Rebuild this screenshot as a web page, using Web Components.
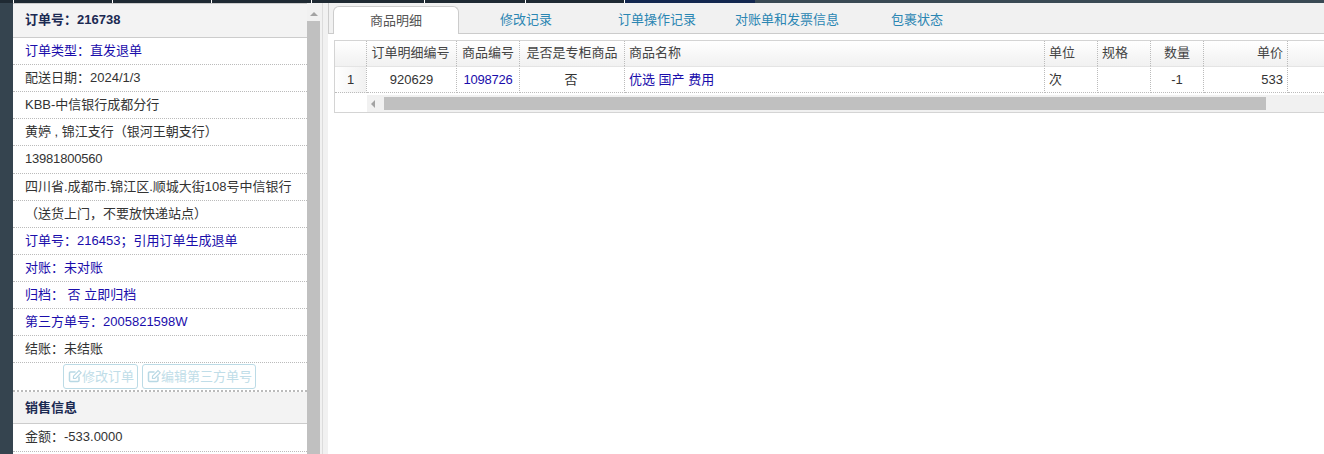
<!DOCTYPE html>
<html lang="zh">
<head>
<meta charset="utf-8">
<style>
  html, body { margin: 0; height: 100%; overflow: hidden; background: #fff; }
  body { font: 12px "Liberation Sans", "Noto Sans CJK SC", sans-serif; color: #333; }
</style>
</head>
<body>
<order-page>
  <order-sidebar slot="side">
    <side-head style="height:33.8px">订单号：216738</side-head>
    <side-row blue>订单类型：直发退单</side-row>
    <side-row>配送日期：2024/1/3</side-row>
    <side-row>KBB-中信银行成都分行</side-row>
    <side-row>黄婷 , 锦江支行（银河王朝支行）</side-row>
    <side-row style="letter-spacing:-.2px">13981800560</side-row>
    <side-row>四川省.成都市.锦江区.顺城大街108号中信银行</side-row>
    <side-row>（送货上门，不要放快递站点）</side-row>
    <side-row blue>订单号：216453；引用订单生成退单</side-row>
    <side-row blue>对账：未对账</side-row>
    <side-row blue>归档： 否 立即归档</side-row>
    <side-row blue>第三方单号：2005821598W</side-row>
    <side-row>结账：未结账</side-row>
    <side-actions>
      <edit-button>修改订单</edit-button>
      <edit-button>编辑第三方单号</edit-button>
    </side-actions>
    <side-head>销售信息</side-head>
    <side-row>金额：-533.0000</side-row>
  </order-sidebar>
  <order-main slot="main"></order-main>
</order-page>
<script>
class OrderPage extends HTMLElement {
  constructor() {
    super();
    this.attachShadow({ mode: "open" });
    this.shadowRoot.innerHTML = `
    <style>
      :host { display: block; height: 454px; overflow: hidden; }
      .top { display: flex; height: 3px; background: #3a4a54; }
      .top i { flex: none; box-sizing: border-box; background: #1f2a33; border-left: 1px solid #fff; }
      .top i:first-child { border: 0; }
      .top b { flex: none; width: 131px; box-sizing: border-box; background: #13274f; border-left: 1px solid #fff; }
      .wrap { display: flex; height: 451px; }
      .rail { width: 13px; flex: none; background: #35444f; }
      .side { width: 294px; flex: none; overflow: hidden; background: #fff; border-top: 1px solid #ccc; }
      .bar { width: 13px; flex: none; display: flex; flex-direction: column; align-items: center; background: #f1f1f1; }
      .bar .up { width: 0; height: 0; margin: 9px 0 5px; border: 4px solid transparent; border-top: 0; border-bottom: 4px solid #a3a3a3; }
      .bar .th { width: 13px; flex: 1; background: #c0c0c0; }
      .gut { width: 8px; flex: none; padding-left: 2px; box-sizing: border-box; background: #f1f1f1; }
      .gut div { height: 100%; border-left: 1px solid #dcdcdc; }
      .main { flex: 1; min-width: 0; }
    </style>
    <div class="top">
      <i style="width:13px"></i><i style="width:99px"></i><i style="width:99px"></i><i style="width:100px"></i>
      <i style="width:113px"></i><i style="width:101px"></i><i style="width:99px"></i><b></b>
    </div>
    <div class="wrap">
      <div class="rail"></div>
      <div class="side"><slot name="side"></slot></div>
      <div class="bar"><div class="up"></div><div class="th"></div></div>
      <div class="gut"><div></div></div>
      <div class="main"><slot name="main"></slot></div>
    </div>`;
  }
}

class OrderSidebar extends HTMLElement {
  constructor() {
    super();
    this.attachShadow({ mode: "open" }).innerHTML = `
    <style>:host { display: block; }</style><slot></slot>`;
  }
}

class SideHead extends HTMLElement {
  constructor() {
    super();
    this.attachShadow({ mode: "open" }).innerHTML = `
    <style>
      :host { display: block; height: 32.5px; line-height: 31px; padding-left: 12px; box-sizing: border-box;
        background: #f3f3f3; border-bottom: 1px solid #ccc; font-weight: bold; font-size: 13px; color: #1b2a52; }
    </style><slot></slot>`;
  }
}

class SideRow extends HTMLElement {
  constructor() {
    super();
    this.attachShadow({ mode: "open" }).innerHTML = `
    <style>
      :host { display: block; height: 27.15px; line-height: 26px; padding-left: 12px; box-sizing: border-box;
        border-bottom: 1px dotted #bbb; font-size: 13px; color: #333; white-space: nowrap; }
      :host([blue]) { color: #1a0dab; }
    </style><slot></slot>`;
  }
}

class SideActions extends HTMLElement {
  constructor() {
    super();
    this.attachShadow({ mode: "open" }).innerHTML = `
    <style>
      :host { display: flex; gap: 4px; height: 28.4px; padding: 1px 0 0 50px; box-sizing: border-box;
        border-bottom: 2px dotted #bbb; }
    </style><slot></slot>`;
  }
}

class EditButton extends HTMLElement {
  constructor() {
    super();
    this.attachShadow({ mode: "open" }).innerHTML = `
    <style>
      :host { display: flex; align-items: center; height: 25px; padding: 0 3px 2px 4px; box-sizing: border-box;
        border: 1px solid #bcdbe6; border-radius: 3px; font-size: 13px; color: #c0dde8; }
      svg { width: 14px; height: 14px; flex: none; }
    </style>
    <svg viewBox="0 0 14 14" fill="none" stroke="#b8d8e4" stroke-width="1.5">
      <path d="M11 7.5V11.5a1 1 0 0 1-1 1H2.5a1 1 0 0 1-1-1V4a1 1 0 0 1 1-1H7.5"/>
      <path d="M5.5 9.5V7.2L11 1.5 13.2 3.7 7.7 9.5z" stroke-width="1.2"/>
    </svg><slot></slot>`;
  }
}

class OrderMain extends HTMLElement {
  constructor() {
    super();
    this.attachShadow({ mode: "open" }).innerHTML = `
    <style>
      :host { display: block; font-size: 13px; }
      .tabs { display: flex; height: 27px; padding: 3px 0 0 2px; background: #f1f1f1;
        border-bottom: 1px solid #ccc; border-left: 1px solid #ccc; }
      .tab { width: 130px; flex: none; box-sizing: border-box; text-align: center; line-height: 28px; color: #2b86b3; }
      .tab.on { height: 28px; margin: 0 2px 0 2px; width: 126px; background: #fff; color: #555;
        border: 1px solid #ccc; border-bottom: 0; border-radius: 6px 6px 0 0; line-height: 27px; }
      .grid { margin: 6px 0 0 6px; border: 1px solid #d4d4d4; border-right: 0; }
      .row { display: grid; grid-template-columns: 32px 90px 63px 105px 420px 53px 53px 53px 84px 1fr; }
      .row > div { padding: 0 4px; box-sizing: border-box; white-space: nowrap; border-right: 1px dotted #bbb; }
      .row > div:last-child { border-right: 0; }
      .hd > div { height: 25px; line-height: 24px; background: linear-gradient(#fff, #f1f1f1); color: #444; }
      .bd > div { height: 27px; line-height: 26px; border-top: 1px solid #e4e4e4; border-bottom: 1px dotted #bbb; }
      .bd > div:first-child { background: linear-gradient(90deg, #fff, #f1f1f1); }
      .c { text-align: center; } .r { text-align: right; }
      .bl { color: #1a0dab; }
      .sb { display: flex; height: 19px; padding: 2px 0 0 32px; box-sizing: border-box; background: #fff; }
      .track { flex: 1; display: flex; align-items: center; background: #f1f1f1; }
      .arr { width: 0; height: 0; border: 4px solid transparent; border-left: 0; border-right: 4px solid #a3a3a3; margin: 0 9px 0 4px; }
      .thumb { width: 882px; height: 13px; background: #c0c0c0; }
    </style>
    <div class="tabs">
      <div class="tab on">商品明细</div>
      <div class="tab">修改记录</div>
      <div class="tab" style="padding-left:2px">订单操作记录</div>
      <div class="tab" style="padding-left:2px">对账单和发票信息</div>
      <div class="tab" style="padding-left:2px">包裹状态</div>
    </div>
    <div class="grid">
      <div class="row hd">
        <div></div><div class="c" style="padding:0 5px 0 3px">订单明细编号</div><div class="c">商品编号</div><div class="c">是否是专柜商品</div>
        <div>商品名称</div><div>单位</div><div>规格</div><div class="c">数量</div><div class="r">单价</div><div></div>
      </div>
      <div class="row bd">
        <div class="c">1</div><div class="c">920629</div><div class="c bl" style="letter-spacing:-.2px">1098726</div><div class="c" style="padding-right:6px">否</div>
        <div class="bl">优选 国产 费用</div><div>次</div><div></div><div class="c">-1</div><div class="r">533</div><div></div>
      </div>
      <div class="sb"><div class="track"><div class="arr"></div><div class="thumb"></div></div></div>
    </div>`;
  }
}

customElements.define("order-page", OrderPage);
customElements.define("order-sidebar", OrderSidebar);
customElements.define("side-head", SideHead);
customElements.define("side-row", SideRow);
customElements.define("side-actions", SideActions);
customElements.define("edit-button", EditButton);
customElements.define("order-main", OrderMain);
</script>
</body>
</html>
